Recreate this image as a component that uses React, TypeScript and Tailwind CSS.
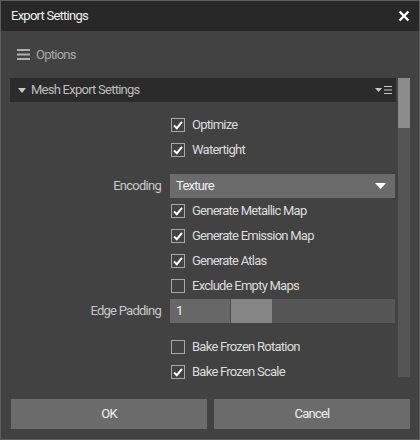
import React from "react";

const font = { fontFamily: "Roboto, 'Liberation Sans', sans-serif" };

function Check({ checked, label }: { checked: boolean; label: string }) {
  return (
    <div className="flex items-center h-[25px] pl-[161px]">
      <div className="w-[14px] h-[14px] border border-[#a8a8a8] flex items-center justify-center">
        {checked && (
          <svg width="12" height="12" viewBox="0 0 12 12">
            <path d="M2 6.5 L4.8 9.2 L10 2.8" stroke="#ffffff" strokeWidth="2" fill="none" />
          </svg>
        )}
      </div>
      <span className="ml-[7px] text-[13px] tracking-[-0.75px] text-[#dcdcdc]">{label}</span>
    </div>
  );
}

export default function App() {
  return (
    <div style={font} className="w-[420px] h-[440px] border border-[#5e5e5e] bg-[#424242] flex flex-col overflow-hidden">
      <div className="h-[30px] shrink-0 bg-[#282828] flex items-center justify-between pl-[10px] pr-[9px]">
        <span className="text-[13px] tracking-[-0.75px] text-[#f0f0f0]">Export Settings</span>
        <svg width="12" height="12" viewBox="0 0 12 12">
          <path d="M1.5 1.5 L10.5 10.5 M10.5 1.5 L1.5 10.5" stroke="#ffffff" strokeWidth="2.4" />
        </svg>
      </div>
      <div className="h-[47px] shrink-0 flex items-center pl-[16px]">
        <svg width="13" height="11" viewBox="0 0 13 11">
          <rect x="0" y="0" width="13" height="2" fill="#b0b0b0" />
          <rect x="0" y="4.5" width="13" height="2" fill="#b0b0b0" />
          <rect x="0" y="9" width="13" height="2" fill="#b0b0b0" />
        </svg>
        <span className="ml-[6px] text-[13px] tracking-[-0.75px] text-[#a9a9a9]">Options</span>
      </div>
      <div className="flex h-[299px] shrink-0 pl-[9px]">
        <div className="w-[386px]">
          <div className="h-[24px] bg-[#2b2b2b] flex items-center justify-between pl-[8px] pr-[4px]">
            <div className="flex items-center">
              <svg width="8" height="5" viewBox="0 0 8 5">
                <path d="M0 0 L8 0 L4 5 Z" fill="#c8c8c8" />
              </svg>
              <span className="ml-[5px] text-[13px] tracking-[-0.75px] text-[#bdbdbd]">Mesh Export Settings</span>
            </div>
            <div className="flex items-center">
              <svg width="7" height="4" viewBox="0 0 7 4">
                <path d="M0 0 L7 0 L3.5 4 Z" fill="#c8c8c8" />
              </svg>
              <svg className="ml-[2px]" width="8" height="8" viewBox="0 0 8 8">
                <rect x="0" y="0" width="8" height="1" fill="#c8c8c8" />
                <rect x="0" y="3.5" width="8" height="1" fill="#c8c8c8" />
                <rect x="0" y="7" width="8" height="1" fill="#c8c8c8" />
              </svg>
            </div>
          </div>
          <div className="h-[10px]" />
          <Check checked label="Optimize" />
          <Check checked label="Watertight" />
          <div className="flex items-center h-[24px] mt-[12px]">
            <div className="w-[151px] text-right text-[13px] tracking-[-0.75px] text-[#c8c8c8]">Encoding</div>
            <div className="ml-[9px] w-[225px] h-[24px] bg-[#6b6b6b] flex items-center justify-between pl-[6px] pr-[9px]">
              <span className="text-[13px] tracking-[-0.75px] text-[#f0f0f0]">Texture</span>
              <svg width="11" height="6" viewBox="0 0 11 6">
                <path d="M0 0 L11 0 L5.5 6 Z" fill="#ffffff" />
              </svg>
            </div>
          </div>
          <Check checked label="Generate Metallic Map" />
          <Check checked label="Generate Emission Map" />
          <Check checked label="Generate Atlas" />
          <Check checked={false} label="Exclude Empty Maps" />
          <div className="flex items-center h-[24px] mt-[1px]">
            <div className="w-[151px] text-right text-[13px] tracking-[-0.75px] text-[#c8c8c8]">Edge Padding</div>
            <div className="ml-[9px] w-[225px] h-[24px] flex">
              <div className="w-[60px] bg-[#676767] flex items-center pl-[6px] text-[13px] text-[#f0f0f0]">1</div>
              <div className="w-[1px] bg-[#4a4a4a]" />
              <div className="w-[41px] bg-[#858585]" />
              <div className="flex-1 bg-[#555555]" />
            </div>
          </div>
          <div className="h-[11px]" />
          <Check checked={false} label="Bake Frozen Rotation" />
          <Check checked label="Bake Frozen Scale" />
        </div>
        <div className="ml-[2px] w-[12px] bg-[#555555] flex flex-col">
          <div className="h-[50px] bg-[#8c8c8c]" />
        </div>
      </div>
      <div className="flex gap-[7px] pl-[10px] pr-[9px] mt-[22px]">
        <button className="flex-1 h-[30px] bg-[#6b6b6b] text-[13px] tracking-[-0.75px] text-[#f0f0f0]">OK</button>
        <button className="flex-1 h-[30px] bg-[#6b6b6b] text-[13px] tracking-[-0.75px] text-[#f0f0f0]">Cancel</button>
      </div>
    </div>
  );
}
